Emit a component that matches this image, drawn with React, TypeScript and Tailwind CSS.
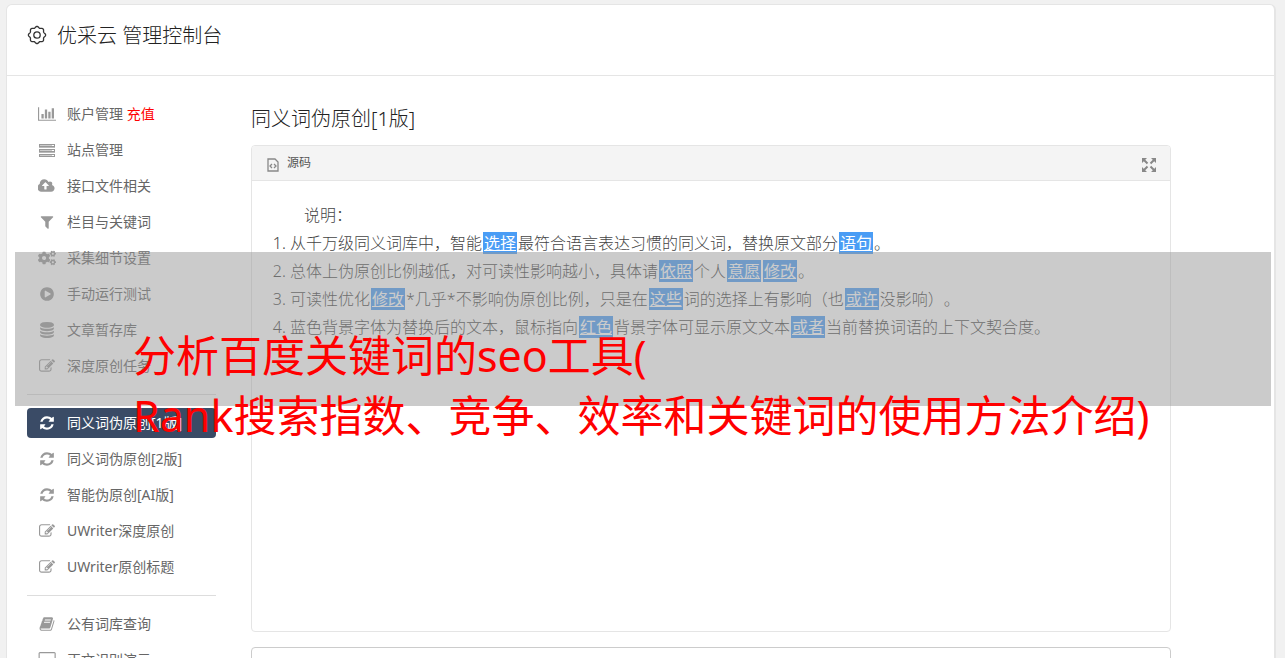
import React from 'react';
import { FaCogs } from 'react-icons/fa';

const glyphs: Record<string, { w: number; d: string }> = {
  chart: {
    w: 2048,
    d: 'M640 896v512h-256v-512h256zm384-512v1024h-256v-1024h256zm1024 1152v128h-2048v-1536h128v1408h1920zm-640-896v768h-256v-768h256zm384-384v1152h-256v-1152h256z',
  },
  cloud: {
    w: 1920,
    d: 'M1216 864q0-14-9-23l-352-352q-9-9-23-9t-23 9l-351 351q-10 12-10 24 0 14 9 23t23 9h224v352q0 13 9.5 22.5t22.5 9.5h192q13 0 22.5-9.5t9.5-22.5v-352h224q13 0 22.5-9.5t9.5-22.5zm640 288q0 159-112.5 271.5t-271.5 112.5h-1088q-185 0-316.5-131.5t-131.5-316.5q0-130 70-240t188-165q-2-30-2-43 0-212 150-362t362-150q156 0 285.5 87t188.5 231q71-62 166-62 106 0 181 75t75 181q0 76-41 138 130 31 213.5 135.5t83.5 238.5z',
  },
  filter: {
    w: 1792,
    d: 'M1595 295q17 41-14 70l-493 493v742q0 42-39 59-13 5-25 5-27 0-45-19l-256-256q-19-19-19-45v-486l-493-493q-31-29-14-70 17-39 59-39h1280q42 0 59 39z',
  },
  play: {
    w: 1792,
    d: 'M896 128q209 0 385.5 103t279.5 279.5 103 385.5-103 385.5-279.5 279.5-385.5 103-385.5-103-279.5-279.5-103-385.5 103-385.5 279.5-279.5 385.5-103zm384 823q32-18 32-55t-32-55l-544-320q-31-19-64-1-32 19-32 56v640q0 37 32 56 16 8 32 8 17 0 32-9z',
  },
  database: {
    w: 1792,
    d: 'M896 768q237 0 443-43t325-127v170q0 69-103 128t-280 93.5-385 34.5-385-34.5-280-93.5-103-128v-170q119 84 325 127t443 43zm0 768q237 0 443-43t325-127v170q0 69-103 128t-280 93.5-385 34.5-385-34.5-280-93.5-103-128v-170q119 84 325 127t443 43zm0-384q237 0 443-43t325-127v170q0 69-103 128t-280 93.5-385 34.5-385-34.5-280-93.5-103-128v-170q119 84 325 127t443 43zm0-1152q208 0 385 34.5t280 93.5 103 128v128q0 69-103 128t-280 93.5-385 34.5-385-34.5-280-93.5-103-128v-128q0-69 103-128t280-93.5 385-34.5z',
  },
  edit: {
    w: 1792,
    d: 'M888 1184l116-116-152-152-116 116v56h96v96h56zm440-720q-16-16-33 1l-350 350q-17 17-1 33t33-1l350-350q17-17 1-33zm80 594v190q0 119-84.5 203.5t-203.5 84.5h-832q-119 0-203.5-84.5t-84.5-203.5v-832q0-119 84.5-203.5t203.5-84.5h832q63 0 117 25 15 7 18 23 3 17-9 29l-49 49q-14 14-32 8-23-6-45-6h-832q-66 0-113 47t-47 113v832q0 66 47 113t113 47h832q66 0 113-47t47-113v-126q0-13 9-22l64-64q15-15 35-7t20 29zm-96-738l288 288-672 672h-288v-288zm444 132l-92 92-288-288 92-92q28-28 68-28t68 28l152 152q28 28 28 68t-28 68z',
  },
  refresh: {
    w: 1792,
    d: 'M1639 1056q0 5-1 7-64 268-268 434.5t-478 166.5q-146 0-282.5-55t-243.5-157l-129 129q-19 19-45 19t-45-19-19-45v-448q0-26 19-45t45-19h448q26 0 45 19t19 45-19 45l-137 137q71 66 161 102t187 36q134 0 250-65t186-179q11-17 53-117 8-23 30-23h192q13 0 22.5 9.5t9.5 22.5zm25-800v448q0 26-19 45t-45 19h-448q-26 0-45-19t-19-45 19-45l138-138q-148-137-349-137-134 0-250 65t-186 179q-11 17-53 117-8 23-30 23h-199q-13 0-22.5-9.5t-9.5-22.5v-7q65-268 270-434.5t480-166.5q146 0 284 55.5t245 156.5l130-129q19-19 45-19t45 19 19 45z',
  },
  book: {
    w: 1792,
    d: 'M1703 478q40 57 18 129l-275 906q-19 64-76.5 107.5t-122.5 43.5h-923q-77 0-148.5-53.5t-99.5-131.5q-24-67-2-127 0-4 3-27t4-37q1-8-3-21.5t-3-19.5q2-11 8-21t16.5-23.5 16.5-23.5q23-38 45-91.5t30-91.5q3-10 .5-30t-.5-28q3-11 17-28t17-23q21-36 42-92t25-90q1-9-2.5-32t.5-28q4-13 22-30.5t22-22.5q19-26 42.5-84.5t27.5-96.5q1-8-3-25.5t-2-26.5q2-8 9-18t18-23 17-21q8-12 16.5-30.5t15-35 16-36 19.5-32 26.5-23.5 36-11.5 47.5 5.5l-1 3q38-9 51-9h761q74 0 114 56t18 130l-274 906q-36 119-71.5 153.5t-128.5 34.5h-869q-27 0-38 15-11 16-1 43 24 70 144 70h923q29 0 56-15.5t35-41.5l300-987q7-22 5-57 38 15 59 43zm-1064 2q-4 13 2 22.5t20 9.5h608q13 0 25.5-9.5t16.5-22.5l21-64q4-13-2-22.5t-20-9.5h-608q-13 0-25.5 9.5t-16.5 22.5zm-83 256q-4 13 2 22.5t20 9.5h608q13 0 25.5-9.5t16.5-22.5l21-64q4-13-2-22.5t-20-9.5h-608q-13 0-25.5 9.5t-16.5 22.5z',
  },
  desktop: {
    w: 2048,
    d: 'M1856 992v-832q0-13-9.5-22.5t-22.5-9.5h-1600q-13 0-22.5 9.5t-9.5 22.5v832q0 13 9.5 22.5t22.5 9.5h1600q13 0 22.5-9.5t9.5-22.5zm128-832v1088q0 66-47 113t-113 47h-544q0 37 16 77.5t32 71 16 43.5q0 26-19 45t-45 19h-512q-26 0-45-19t-19-45q0-14 16-44t32-70 16-78h-544q-66 0-113-47t-47-113v-1088q0-66 47-113t113-47h1600q66 0 113 47t47 113z',
  },
};

// wavy rim with eight rounded teeth
const gearRim = Array.from({ length: 96 }, (_, i) => {
  const a = (i / 96) * Math.PI * 2;
  const r = 7.9 + 0.7 * Math.cos(8 * a);
  return `${(10 + r * Math.cos(a)).toFixed(2)},${(10 + r * Math.sin(a)).toFixed(2)}`;
}).join(' ');

const GearIcon = () => (
  <svg viewBox="0 0 20 20" className="mt-1 h-5 w-5" fill="none" stroke="#333" strokeWidth="1.3">
    <polygon points={gearRim} strokeLinejoin="round" />
    <circle cx="10" cy="10" r="3.2" />
  </svg>
);

const ServerIcon = () => (
  <svg viewBox="0 0 16 13" className="h-[13px] w-4">
    {[0, 5, 10].map((y) => (
      <g key={y}>
        <rect x="0" y={y} width="16" height="3" fill="#999" />
        <rect x="1" y={y + 1} width="12" height="1" fill="#ccc" />
        <rect x="13" y={y + 1} width="2" height="1" fill="#fff" />
      </g>
    ))}
    <path d="M0 3.5h16M0 8.5h16" stroke="#bbb" />
  </svg>
);

const MenuIcon = ({ name }: { name: string }) => {
  if (name === 'server') return <ServerIcon />;
  if (name === 'cogs') return <FaCogs size={18} />;
  const glyph = glyphs[name];
  return (
    <svg viewBox={`0 0 ${glyph.w} 1792`} className="h-4 w-auto" fill="currentColor">
      <path d={glyph.d} />
    </svg>
  );
};

type Item = { icon: string; label: string; extra?: string; active?: boolean };

const menu: Item[][] = [
  [
    { icon: 'chart', label: '账户管理', extra: '充值' },
    { icon: 'server', label: '站点管理' },
    { icon: 'cloud', label: '接口文件相关' },
    { icon: 'filter', label: '栏目与关键词' },
    { icon: 'cogs', label: '采集细节设置' },
    { icon: 'play', label: '手动运行测试' },
    { icon: 'database', label: '文章暂存库' },
    { icon: 'edit', label: '深度原创任务' },
  ],
  [
    { icon: 'refresh', label: '同义词伪原创[1版]', active: true },
    { icon: 'refresh', label: '同义词伪原创[2版]' },
    { icon: 'refresh', label: '智能伪原创[AI版]' },
    { icon: 'edit', label: 'UWriter深度原创' },
    { icon: 'edit', label: 'UWriter原创标题' },
  ],
  [
    { icon: 'book', label: '公有词库查询' },
    { icon: 'desktop', label: '正文识别演示' },
  ],
];

const Sidebar = () => (
  <nav className="w-[189px] shrink-0 pt-[23px]">
    {menu.map((group, i) => (
      <React.Fragment key={i}>
        {i > 0 && <hr className="my-[13px] border-[#ddd]" />}
        <ul className="flex flex-col gap-1.5">
          {group.map((item) => (
            <li key={item.label}>
              <a
                href="#"
                className={
                  item.active
                    ? 'flex h-[30px] items-center gap-2.5 rounded bg-[#3a4b66] px-2.5 text-sm text-white'
                    : 'flex h-[30px] items-center gap-2.5 rounded px-2.5 text-sm text-[#666]'
                }
              >
                <span className={item.active ? 'flex w-5 justify-center text-white' : 'flex w-5 justify-center text-[#999]'}>
                  <MenuIcon name={item.icon} />
                </span>
                <span className="whitespace-nowrap">
                  {item.label}
                  {item.extra && <span className="text-[#f00]"> {item.extra}</span>}
                </span>
              </a>
            </li>
          ))}
        </ul>
      </React.Fragment>
    ))}
  </nav>
);

// replaced word
const Mark = ({ children }: { children: React.ReactNode }) => (
  <span className="mx-px bg-[#4a9df5] px-px font-normal text-white underline">{children}</span>
);

const Editor = () => (
  <section className="h-[487px] overflow-hidden rounded border border-[#e5e5e5]">
    <div className="flex h-[35px] items-center justify-between border-b border-[#e5e5e5] bg-[#f4f4f4] pr-3.5 pl-[15px]">
      <button type="button" className="flex items-center gap-2 text-xs text-[#555]">
        <svg viewBox="0 0 12 14" className="mt-1 h-3.5 w-3" fill="none" stroke="#888">
          <path d="M1 1h7l3 3v9h-10z" strokeWidth="1.3" />
          <path d="M5 6l-2 2 2 2M7 6l2 2-2 2" strokeWidth="1.3" />
        </svg>
        源码
      </button>
      <button type="button" aria-label="最大化">
        <svg viewBox="0 0 14 14" className="mt-1 h-3.5 w-3.5" fill="#888" stroke="#888">
          <path d="M0 0h5l-5 5zM14 0v5l-5-5zM0 14v-5l5 5zM14 14h-5l5-5z" stroke="none" />
          <path d="M2 2l3.5 3.5M12 2L8.5 5.5M2 12l3.5-3.5M12 12L8.5 8.5" strokeWidth="2" />
        </svg>
      </button>
    </div>
    <div className="px-5 pt-5 text-base leading-7 font-light text-[#444]">
      <p className="indent-8">说明：</p>
      <ol className="list-decimal pl-[18px]">
        <li>
          从千万级同义词库中，智能<Mark>选择</Mark>最符合语言表达习惯的同义词，替换原文部分<Mark>语句</Mark>。
        </li>
        <li>
          总体上伪原创比例越低，对可读性影响越小，具体请<Mark>依照</Mark>个人<Mark>意愿</Mark><Mark>修改</Mark>。
        </li>
        <li>
          可读性优化<Mark>修改</Mark>*几乎*不影响伪原创比例，只是在<Mark>这些</Mark>词的选择上有影响（也<Mark>或许</Mark>没影响）。
        </li>
        <li>
          蓝色背景字体为替换后的文本，鼠标指向<Mark>红色</Mark>背景字体可显示原文文本<Mark>或者</Mark>当前替换词语的上下文契合度。
        </li>
      </ol>
    </div>
  </section>
);

const Banner = () => (
  <div className="pointer-events-none absolute top-[252px] right-3.5 left-[15px] h-[154px] bg-[#979797]/50 pt-[74px] pl-[118px]">
    <p className="text-[43px] leading-[60px] whitespace-nowrap text-[#f00]">
      分析百度关键词的seo工具(
      <br />
      Rank搜索指数、竞争、效率和关键词的使用方法介绍)
    </p>
  </div>
);

const App = () => {
  return (
    <div className="relative h-screen overflow-hidden bg-[#f1f1f1] pt-1 pr-[9px] pl-1.5 font-['Noto_Sans','Noto_Sans_CJK_SC',sans-serif] [text-spacing-trim:space-all]">
      <div className="min-h-screen rounded-md border border-r-2 border-[#e5e5e5] bg-white">
        <header className="flex items-start gap-2.5 border-b border-[#e5e5e5] px-5 pt-4 pb-6 text-[#222]">
          <GearIcon />
          <h1 className="text-xl leading-[30px] font-light">优采云 管理控制台</h1>
        </header>
        <div className="flex gap-[35px] pr-[103px] pl-5">
          <Sidebar />
          <main className="min-w-0 flex-1 pt-[29px]">
            <h2 className="mb-3 text-xl font-light text-[#222]">同义词伪原创[1版]</h2>
            <Editor />
            <textarea aria-label="原文" className="mt-[15px] block h-40 w-full resize-none rounded border border-[#ccc] bg-white p-3" />
          </main>
        </div>
      </div>
      <Banner />
    </div>
  );
};

export default App;
